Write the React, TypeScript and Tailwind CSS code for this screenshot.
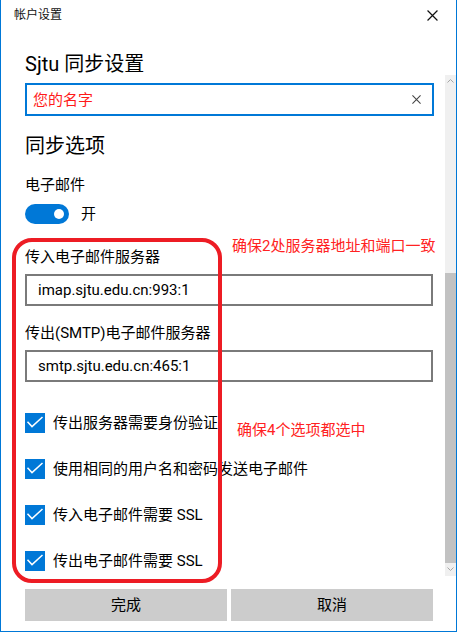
import React from "react";

const FONT = { fontFamily: 'Roboto, "Noto Sans CJK SC", sans-serif' };

function CloseGlyph({ size, stroke, color }: { size: number; stroke: number; color: string }) {
  return (
    <svg width={size} height={size} viewBox="0 0 10 10">
      <path d="M0.5 0.5 L9.5 9.5 M9.5 0.5 L0.5 9.5" stroke={color} strokeWidth={stroke} fill="none" />
    </svg>
  );
}

function Check({ label }: { label: string }) {
  return (
    <div className="flex items-center h-[20px]">
      <div className="w-[20px] h-[20px] bg-[#0078d7]">
        <svg width="20" height="20" viewBox="0 0 20 20">
          <path d="M2.5 8.8 L7 13.6 L17.5 4" stroke="#ffffff" strokeWidth="1.5" fill="none" />
        </svg>
      </div>
      <span className="ml-[8px] text-[15px] leading-[20px] text-black">{label}</span>
    </div>
  );
}

function Field({ value }: { value: string }) {
  return (
    <div className="w-[408px] h-[32px] border-2 border-[#7a7a7a] flex items-center pl-[11px]">
      <span className="text-[15px] leading-[20px] text-black">{value}</span>
    </div>
  );
}

export default function App() {
  return (
    <div
      className="relative w-[457px] h-[632px] bg-white border-l border-r border-b border-[#0078d7] flex flex-col overflow-hidden"
      style={FONT}
    >
      {/* title bar */}
      <div className="h-[30px] flex items-center justify-between pl-[13px] pr-[18px]">
        <span className="text-[12px] leading-[16px] text-[#111]">帐户设置</span>
        <CloseGlyph size={11} stroke={1.1} color="#111" />
      </div>

      <div className="flex flex-1">
        {/* settings content */}
        <div className="flex flex-col pl-[24px] w-[433px]">
          <div className="mt-[20px] text-[20px] leading-[28px] text-black">Sjtu 同步设置</div>

          <div className="mt-[5px] w-[409px] h-[33px] border-2 border-[#0078d7] flex items-center justify-between pl-[6px] pr-[11px]">
            <span className="text-[15px] leading-[20px] text-[#ff1a1a]">您的名字</span>
            <CloseGlyph size={9} stroke={1.2} color="#444" />
          </div>

          <div className="mt-[16px] text-[20px] leading-[28px] text-black">同步选项</div>

          <div className="mt-[15px] text-[15px] leading-[20px] text-black">电子邮件</div>

          <div className="mt-[9px] flex items-center h-[20px]">
            <div className="w-[44px] h-[20px] rounded-full bg-[#0078d7] flex items-center justify-end pr-[5px]">
              <div className="w-[10px] h-[10px] rounded-full bg-white" />
            </div>
            <span className="ml-[12px] text-[15px] leading-[20px] text-black">开</span>
          </div>

          <div className="mt-[23px] text-[15px] leading-[20px] text-black">传入电子邮件服务器</div>
          <div className="mt-[7px]">
            <Field value="imap.sjtu.edu.cn:993:1" />
          </div>

          <div className="mt-[17px] text-[15px] leading-[20px] text-black">传出(SMTP)电子邮件服务器</div>
          <div className="mt-[7px]">
            <Field value="smtp.sjtu.edu.cn:465:1" />
          </div>

          <div className="mt-[31px] flex flex-col gap-[26px]">
            <Check label="传出服务器需要身份验证" />
            <Check label="使用相同的用户名和密码发送电子邮件" />
            <Check label="传入电子邮件需要 SSL" />
            <Check label="传出电子邮件需要 SSL" />
          </div>

          <div className="mt-[18px] flex gap-[4px] w-[408px]">
            <div className="flex-1 h-[32px] bg-[#cccccc] flex items-center justify-center text-[15px] text-black">完成</div>
            <div className="flex-1 h-[32px] bg-[#cccccc] flex items-center justify-center text-[15px] text-black">取消</div>
          </div>
        </div>

        {/* scrollbar */}
        <div className="ml-[11px] mt-[45px] w-[11px] h-[501px] bg-[#f0f0f0] flex flex-col">
          <div className="h-[12px] flex items-center justify-center">
            <svg width="7" height="4" viewBox="0 0 7 4">
              <path d="M0.5 3.5 L3.5 0.5 L6.5 3.5" stroke="#a6a6a6" strokeWidth="1" fill="none" />
            </svg>
          </div>
          <div className="h-[186px]" />
          <div className="h-[290px] bg-[#c2c2c2]" />
          <div className="h-[12px] flex items-center justify-center">
            <svg width="7" height="4" viewBox="0 0 7 4">
              <path d="M0.5 0.5 L3.5 3.5 L6.5 0.5" stroke="#a6a6a6" strokeWidth="1" fill="none" />
            </svg>
          </div>
        </div>
      </div>

      {/* annotation frame around the server settings */}
      <div className="absolute left-[11px] top-[238px] w-[210px] h-[345px] border-4 border-[#ed1c24] rounded-[20px] pointer-events-none" />
      <div className="absolute left-[231px] top-[236px] text-[15px] leading-[20px] text-[#ff2222]">确保2处服务器地址和端口一致</div>
      <div className="absolute left-[236px] top-[420px] text-[15px] leading-[20px] text-[#ff2222]">确保4个选项都选中</div>
    </div>
  );
}
